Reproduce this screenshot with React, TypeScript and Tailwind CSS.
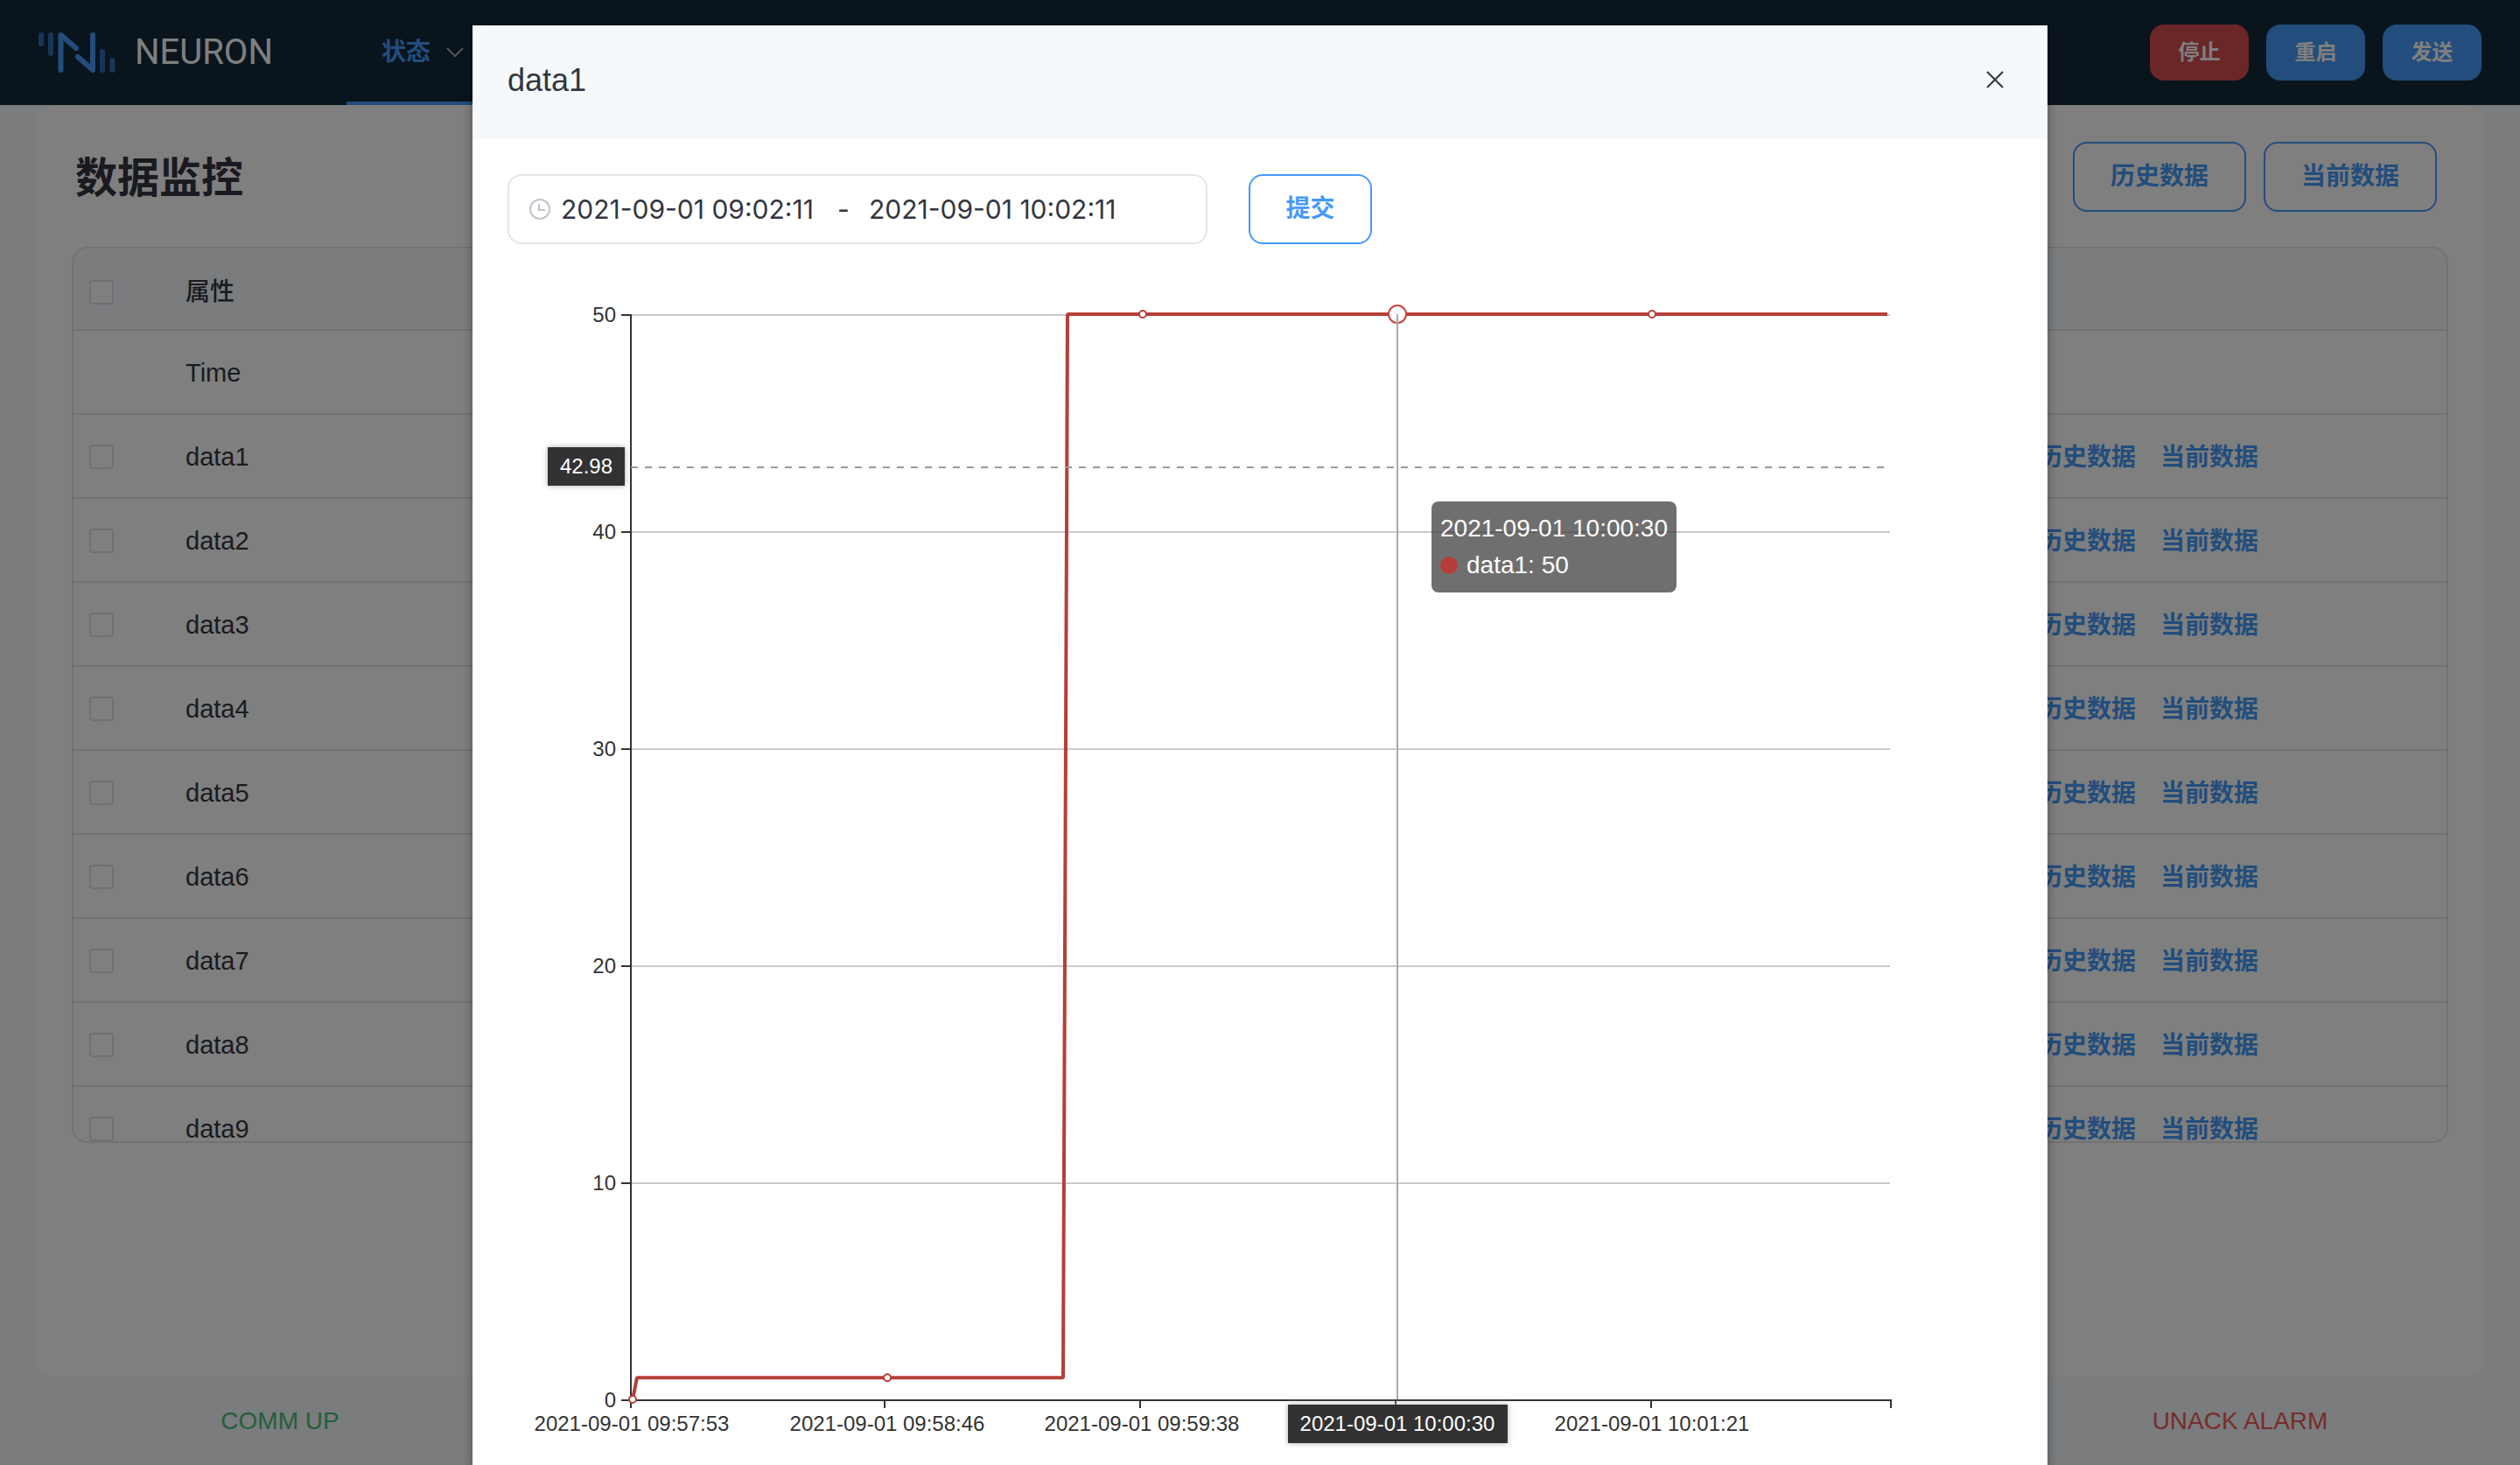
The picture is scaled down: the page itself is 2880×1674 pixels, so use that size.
import React from "react";

const CJK_SANS = "font-['Liberation_Sans','Noto_Sans_CJK_SC',sans-serif]";

const TAGS = ["data1", "data2", "data3", "data4", "data5", "data6", "data7", "data8", "data9"];

function Logo() {
  return (
    <svg className="h-12 w-[88px]" viewBox="0 0 88 48" fill="none" strokeLinecap="round" strokeLinejoin="round" strokeWidth="6" aria-hidden="true">
      <g stroke="#2f6cac">
        <path d="M3 4v10M14 4v21M73 23v21M84.500 33v11" />
      </g>
      <g stroke="#459af8">
        <path d="M25.500 44V4L43 19" />
        <path d="M45 29L62 44V4" />
      </g>
    </svg>
  );
}

function Header() {
  return (
    <header className="flex h-[120px] shrink-0 items-stretch bg-[#12283a] pr-[44px] pl-[44px]">
      <a href="#home" className="flex w-[352px] items-center gap-[22px] text-[40px] text-white font-['Roboto',sans-serif]">
        <Logo />
        NEURON
      </a>
      <nav className="flex items-stretch">
        <a href="#status" className="flex w-[200px] items-center gap-[18px] border-b-4 border-[#459af8] pt-1 pl-10 text-[28px] font-bold text-[#459af8]">
          状态
          <svg className="h-5 w-5" viewBox="0 0 20 20" fill="none" stroke="#a6abb3" strokeWidth="2" aria-hidden="true">
            <path d="M1 5l9 9 9-9" />
          </svg>
        </a>
      </nav>
      <div className="ml-auto flex items-center gap-5 text-[24px] font-bold text-white">
        <button type="button" className="h-16 w-[113px] rounded-2xl bg-[#d64c50]">停止</button>
        <button type="button" className="h-16 w-[113px] rounded-2xl bg-[#459af8]">重启</button>
        <button type="button" className="h-16 w-[113px] rounded-2xl bg-[#459af8]">发送</button>
      </div>
    </header>
  );
}

function Tick({ label }: { label: string }) {
  return (
    <input
      type="checkbox"
      aria-label={label}
      className="ml-[18px] block h-7 w-7 appearance-none rounded-[4px] border-2 border-[#dfe0ea] bg-white"
    />
  );
}

function MonitorTable() {
  return (
    <div className="h-[1024px] overflow-hidden rounded-[18px] border-2 border-[#e3e5e9]">
      <table className="w-full table-fixed border-separate border-spacing-0 text-left text-[29px] text-[#333640]">
        <colgroup>
          <col className="w-[128px]" />
          <col />
          <col className="w-[467px]" />
        </colgroup>
        <thead>
          <tr className="h-[94px] bg-[#f5f9fc]">
            <th className="border-b-2 border-[#e3e5e9] p-0 pt-2"><Tick label="全选" /></th>
            <th className="border-b-2 border-[#e3e5e9] p-0 pt-2 text-[28px] font-medium">属性</th>
            <th className="border-b-2 border-[#e3e5e9] p-0" />
          </tr>
        </thead>
        <tbody>
          <tr className="h-24">
            <td className="border-b-2 border-[#e3e5e9] p-0" />
            <td className="border-b-2 border-[#e3e5e9] p-0 pt-1">Time</td>
            <td className="border-b-2 border-[#e3e5e9] p-0" />
          </tr>
          {TAGS.map((tag) => (
            <tr key={tag} className="h-24">
              <td className="border-b-2 border-[#e3e5e9] p-0 pt-0.5"><Tick label={tag} /></td>
              <td className="border-b-2 border-[#e3e5e9] p-0 pt-1">{tag}</td>
              <td className="border-b-2 border-[#e3e5e9] p-0 pt-1">
                <div className="flex gap-7 text-[28px] font-bold text-[#459af8]">
                  <a href="#history">历史数据</a>
                  <a href="#current">当前数据</a>
                </div>
              </td>
            </tr>
          ))}
        </tbody>
      </table>
    </div>
  );
}

const PLOT_LEFT = 141;
const PLOT_RIGHT = 1580;
const PLOT_BOTTOM = 1320;
const yFor = (v: number) => PLOT_BOTTOM - v * 24.8;

const X_TICKS = [141, 431, 723, 1015, 1307, 1581];
const X_LABELS = [
  { x: 142, text: "2021-09-01 09:57:53" },
  { x: 434, text: "2021-09-01 09:58:46" },
  { x: 725, text: "2021-09-01 09:59:38" },
  { x: 1308, text: "2021-09-01 10:01:21" },
];
const POINTS = [
  { x: 143, v: 0 },
  { x: 434, v: 1 },
  { x: 726, v: 50 },
  { x: 1308, v: 50 },
];

function Chart() {
  return (
    <div className="relative">
      <svg className="block w-full text-[24px] font-['Liberation_Sans',sans-serif]" viewBox="0 0 1720 1400" fill="#333333">
        <defs>
          <filter id="labelShadow" x="-20%" y="-40%" width="140%" height="180%">
            <feDropShadow dx="0" dy="0" stdDeviation="3" floodColor="#aaaaaa" />
          </filter>
        </defs>
        {[10, 20, 30, 40, 50].map((v) => (
          <line key={v} x1={PLOT_LEFT} x2={PLOT_RIGHT} y1={yFor(v) + 1} y2={yFor(v) + 1} stroke="#cccccc" strokeWidth="2" />
        ))}
        <g stroke="#333333" strokeWidth="2">
          <line x1={PLOT_LEFT} x2={PLOT_LEFT} y1={yFor(50)} y2={PLOT_BOTTOM + 1} />
          <line x1={PLOT_LEFT} x2={PLOT_RIGHT + 2} y1={PLOT_BOTTOM + 1} y2={PLOT_BOTTOM + 1} />
          {[0, 10, 20, 30, 40, 50].map((v) => (
            <line key={v} x1={PLOT_LEFT - 11} x2={PLOT_LEFT} y1={yFor(v) + 1} y2={yFor(v) + 1} />
          ))}
          {X_TICKS.map((x) => (
            <line key={x} x1={x} x2={x} y1={PLOT_BOTTOM} y2={PLOT_BOTTOM + 10} />
          ))}
        </g>
        {[0, 10, 20, 30, 40, 50].map((v) => (
          <text key={v} x={PLOT_LEFT - 17} y={yFor(v) + 9} textAnchor="end">{v}</text>
        ))}
        {X_LABELS.map((l) => (
          <text key={l.text} x={l.x} y={PLOT_BOTTOM + 36} textAnchor="middle">{l.text}</text>
        ))}
        <polyline
          points={`143,${yFor(0)} 148,${yFor(1)} 635,${yFor(1)} 640,${yFor(50)} 1577,${yFor(50)}`}
          fill="none"
          stroke="#b53f38"
          strokeWidth="4"
          strokeLinejoin="bevel"
        />
        {POINTS.map((p) => (
          <circle key={p.x} cx={p.x} cy={yFor(p.v)} r="4" fill="#ffffff" stroke="#b53f38" strokeWidth="2" />
        ))}
        <circle cx="1017" cy={yFor(50)} r="10" fill="#ffffff" stroke="#c8453d" strokeWidth="2" />
        <line x1="1017" x2="1017" y1={yFor(50)} y2={PLOT_BOTTOM} stroke="#aaaaaa" strokeWidth="2" />
        <line x1={PLOT_LEFT} x2={PLOT_RIGHT} y1="255" y2="255" stroke="#999999" strokeWidth="2" strokeDasharray="8 8" />
        <rect x="46" y="232" width="88" height="44" filter="url(#labelShadow)" />
        <text x="90" y="262" fill="#ffffff" textAnchor="middle">42.98</text>
        <rect x="892" y="1326" width="251" height="44" filter="url(#labelShadow)" />
        <text x="1017" y="1356" fill="#ffffff" textAnchor="middle">2021-09-01 10:00:30</text>
      </svg>
      <div className="absolute top-[294px] left-[1056px] rounded-lg bg-[#323232]/70 p-[10px] text-[28px] leading-[42px] whitespace-nowrap text-white">
        <div>2021-09-01 10:00:30</div>
        <div className="flex items-center gap-[10px]">
          <span className="h-5 w-5 rounded-full bg-[#b53f38]" />
          data1: 50
        </div>
      </div>
    </div>
  );
}

function HistoryDialog() {
  return (
    <section role="dialog" aria-modal="true" aria-labelledby="dialog-title" className="mx-auto mt-[29px] w-[62.5%] bg-white shadow-[0_2px_12px_rgba(0,0,0,0.35)]">
      <div className="flex h-[130px] items-center justify-between bg-[#f5f9fc] px-10 pb-1 text-[#33363f]">
        <h2 id="dialog-title" className="text-[36px]">data1</h2>
        <button type="button" aria-label="关闭" className="flex h-10 w-10 items-center justify-center">
          <svg className="mb-0.5 h-5 w-5" viewBox="0 0 20 20" fill="none" stroke="currentColor" strokeWidth="2" aria-hidden="true">
            <path d="M1 1l18 18M19 1L1 19" />
          </svg>
        </button>
      </div>
      <div className="px-10 pt-10">
        <form className="flex gap-[47px]">
          <div className="flex h-20 w-[800px] items-center rounded-2xl border-2 border-[#e1e6ea] pl-[23px] text-[30px] text-[#33363f] font-['Inter',sans-serif]">
            <svg className="mr-3 h-6 w-6 shrink-0" viewBox="0 0 24 24" fill="none" stroke="#c0c4cc" strokeWidth="2" aria-hidden="true">
              <circle cx="12" cy="12" r="11" />
              <path d="M11 6v7h7" />
            </svg>
            <input type="text" aria-label="开始时间" defaultValue="2021-09-01 09:02:11" className="w-[306px] bg-transparent outline-none" />
            <span className="mr-3 w-[34px] text-center">-</span>
            <input type="text" aria-label="结束时间" defaultValue="2021-09-01 10:02:11" className="w-[306px] bg-transparent outline-none" />
          </div>
          <button type="button" className="h-20 w-[141px] rounded-2xl border-2 border-[#459af8] text-[28px] font-bold text-[#459af8]">提交</button>
        </form>
        <Chart />
      </div>
    </section>
  );
}

export default function App() {
  return (
    <div className={`relative flex h-screen flex-col overflow-hidden bg-[#f5f9fc] ${CJK_SANS}`}>
      <Header />
      <main className="mx-10 grow rounded-3xl bg-white px-[42px] pt-[42px]">
        <div className="mb-10 flex h-20 items-center justify-between pr-[13px] pl-1">
          <h1 className="pt-1 text-[48px] font-bold text-[#333640]">数据监控</h1>
          <div className="flex gap-5 text-[28px] font-bold text-[#459af8]">
            <button type="button" className="h-20 w-[198px] rounded-2xl border-2 border-[#459af8]">历史数据</button>
            <button type="button" className="h-20 w-[198px] rounded-2xl border-2 border-[#459af8]">当前数据</button>
          </div>
        </div>
        <MonitorTable />
      </main>
      <footer className="flex h-[100px] shrink-0 items-center justify-between text-center text-[28px]">
        <span className="w-[640px] text-[#4cbc76]">COMM UP</span>
        <span className="w-[640px] text-[#ee5a56]">UNACK ALARM</span>
      </footer>
      <div className="absolute inset-0 overflow-hidden bg-black/50">
        <HistoryDialog />
      </div>
    </div>
  );
}
